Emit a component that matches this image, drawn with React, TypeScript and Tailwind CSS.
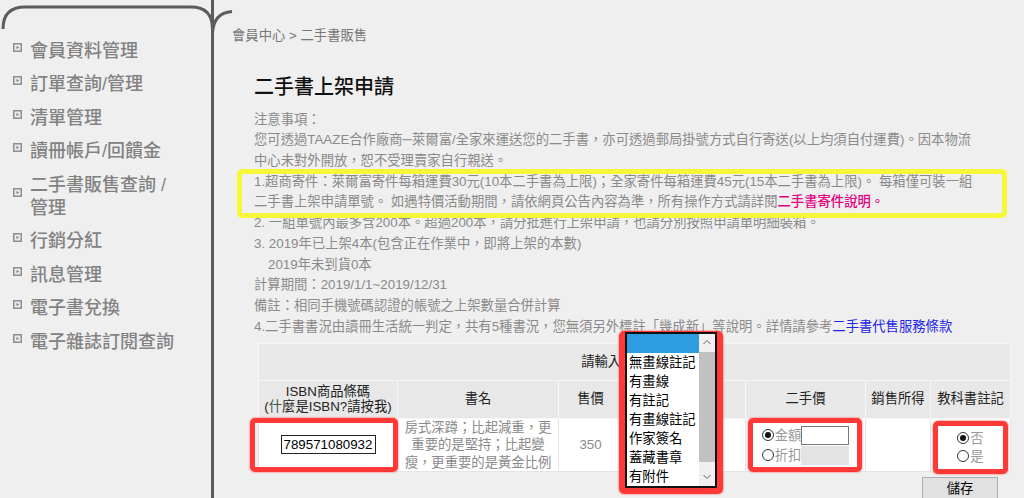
import React from "react";

function Bullet() {
  return (
    <svg width="9" height="9" viewBox="0 0 9 9" className="shrink-0 -translate-y-[4px]">
      <rect x="0" y="0" width="9" height="9" fill="#8f8f8f" />
      <rect x="1.5" y="1.5" width="6" height="6" fill="#e9e9e9" />
      <path d="M3.5 3 L6 4.5 L3.5 6 Z" fill="#7a7a7a" />
    </svg>
  );
}

function Radio({ checked }: { checked?: boolean }) {
  return (
    <span className="w-[12px] h-[12px] rounded-full border border-[#333] bg-white flex items-center justify-center shrink-0">
      {checked && <span className="w-[6px] h-[6px] rounded-full bg-[#111]" />}
    </span>
  );
}

const menu: React.ReactNode[] = [
  "會員資料管理",
  "訂單查詢/管理",
  "清單管理",
  "讀冊帳戶/回饋金",
  <>
    二手書販售查詢 /<br />
    管理
  </>,
  "行銷分紅",
  "訊息管理",
  "電子書兌換",
  "電子雜誌訂閱查詢",
];

const options = ["", "無畫線註記", "有畫線", "有註記", "有畫線註記", "作家簽名", "蓋藏書章", "有附件"];

export default function App() {
  return (
    <div className="w-[1024px] h-[498px] overflow-hidden bg-[#efefef] flex relative font-['Liberation_Sans','Noto_Sans_CJK_TC',sans-serif]">
      {/* decorative frame curves */}
      <svg className="absolute left-0 top-0 pointer-events-none" width="240" height="40" viewBox="0 0 240 40">
        <path d="M3 29 Q3 7 25 7 L191 7 Q212.5 7 212.5 29" stroke="#5c5c5c" strokeWidth="3" fill="none" />
        <path d="M212.5 34 Q213 13 232 11.5" stroke="#5c5c5c" strokeWidth="3" fill="none" />
      </svg>

      <aside className="w-[214px] shrink-0 h-full border-r-[3px] border-[#5c5c5c] pt-[39.5px] flex flex-col gap-[10.5px]">
        {menu.map((m, i) => (
          <div key={i} className="flex items-center pl-[13px]">
            <Bullet />
            <span className="ml-[8px] text-[18px] leading-[23px] text-[#828282] font-medium whitespace-nowrap">{m}</span>
          </div>
        ))}
      </aside>

      <main className="flex-1 pl-[18px] pt-[27px]">
        <div className="text-[13.33px] leading-[18px] text-[#777] whitespace-nowrap">會員中心 &gt; 二手書販售</div>
        <h1 className="ml-[22px] mt-[28px] text-[20px] leading-[28px] font-medium text-[#111] whitespace-nowrap">二手書上架申請</h1>

        <div className="ml-[22px] mt-[8.6px] text-[13.33px] leading-[20.7px] text-[#8a8a8a] whitespace-nowrap">
          <div>注意事項：</div>
          <div>您可透過TAAZE合作廠商─萊爾富/全家來運送您的二手書，亦可透過郵局掛號方式自行寄送(以上均須自付運費)。因本物流</div>
          <div>中心未對外開放，恕不受理賣家自行親送。</div>
          <div className="relative">
            <div>1.超商寄件：萊爾富寄件每箱運費30元(10本二手書為上限)；全家寄件每箱運費45元(15本二手書為上限)。 每箱僅可裝一組</div>
            <div>
              二手書上架申請單號。 如遇特價活動期間，請依網頁公告內容為準，所有操作方式請詳閱
              <span className="text-[#e4007f] font-medium">二手書寄件說明。</span>
            </div>
            <div className="absolute left-[-17px] top-[-3px] w-[770px] h-[49px] border-[5px] border-[#f7f73a] rounded-[5px] pointer-events-none" />
          </div>
          <div>2. 一組單號內最多含200本。超過200本，請分批進行上架申請，也請分別按照申請單明細裝箱。</div>
          <div>3. 2019年已上架4本(包含正在作業中，即將上架的本數)</div>
          <div className="pl-[14px]">2019年未到貨0本</div>
          <div>計算期間：2019/1/1~2019/12/31</div>
          <div>備註：相同手機號碼認證的帳號之上架數量合併計算</div>
          <div>
            4.二手書書況由讀冊生活統一判定，共有5種書況，您無須另外標註「幾成新」等說明。詳情請參考
            <span className="text-[#2323e6]">二手書代售服務條款</span>
          </div>
        </div>

        <div className="ml-[26px] mt-[5.6px] w-[752px] relative">
          <table className="w-[752px] table-fixed border-collapse text-[13.33px] text-[#222]">
            <colgroup>
              <col className="w-[139px]" />
              <col className="w-[161px]" />
              <col className="w-[64px]" />
              <col className="w-[123px]" />
              <col className="w-[120px]" />
              <col className="w-[65px]" />
              <col className="w-[80px]" />
            </colgroup>
            <tbody>
              <tr className="h-[37px] bg-[#e8e8e8]">
                <td colSpan={7} className="border border-[#f6f6f6] text-center">請輸入二手書資料</td>
              </tr>
              <tr className="h-[38px] bg-[#e8e8e8]">
                <td className="border border-[#f6f6f6] text-center leading-[15px]">
                  <div>ISBN商品條碼</div>
                  <div>
                    (<span className="text-[#3d5a3d]">什</span>麼是ISBN?請按我)
                  </div>
                </td>
                <td className="border border-[#f6f6f6] text-center">書名</td>
                <td className="border border-[#f6f6f6] text-center">售價</td>
                <td className="border border-[#f6f6f6] text-center">書況</td>
                <td className="border border-[#f6f6f6] text-center">二手價</td>
                <td className="border border-[#f6f6f6] text-center">銷售所得</td>
                <td className="border border-[#f6f6f6] text-center">教科書註記</td>
              </tr>
              <tr className="h-[52px] bg-white">
                <td className="border border-[#e4e4e4] text-center">
                  <div className="inline-flex items-center w-[95px] h-[19px] border border-[#222] px-[2px] text-black bg-white leading-none">
                    789571080932
                  </div>
                </td>
                <td className="border border-[#e4e4e4] text-center text-[#8a8a8a] leading-[17.5px] whitespace-nowrap">
                  房式深蹲；比起減重，更<br />
                  重要的是堅持；比起變<br />
                  瘦，更重要的是黃金比例
                </td>
                <td className="border border-[#e4e4e4] text-center text-[#8a8a8a]">350</td>
                <td className="border border-[#e4e4e4]"></td>
                <td className="border border-[#e4e4e4]">
                  <div className="flex flex-col items-center">
                    <div className="flex items-center h-[20px]">
                      <Radio checked />
                      <span className="text-[#9a9a9a] ml-[1px] leading-none">金額</span>
                      <span className="w-[48px] h-[19px] border border-[#777] bg-white" />
                    </div>
                    <div className="flex items-center h-[20px]">
                      <Radio />
                      <span className="text-[#9a9a9a] ml-[1px] leading-none">折扣</span>
                      <span className="w-[48px] h-[19px] bg-[#e3e3e3]" />
                    </div>
                  </div>
                </td>
                <td className="border border-[#e4e4e4]"></td>
                <td className="border border-[#e4e4e4]">
                  <div className="flex flex-col items-center mt-[4px]">
                    <div className="flex items-center h-[18px]">
                      <Radio checked />
                      <span className="text-[#9a9a9a] ml-[1px] leading-none">否</span>
                    </div>
                    <div className="flex items-center h-[18px]">
                      <Radio />
                      <span className="text-[#9a9a9a] ml-[1px] leading-none">是</span>
                    </div>
                  </div>
                </td>
              </tr>
            </tbody>
          </table>

          <div className="flex justify-end pr-[12px] mt-[5px]">
            <button className="w-[76px] h-[22px] bg-[#e1e1e1] border border-[#adadad] text-[13.33px] text-black leading-none">儲存</button>
          </div>

          {/* red annotations */}
          <div className="absolute left-[-8px] top-[75px] w-[148px] h-[54px] border-[5px] border-[#ff3838] rounded-[5px] shadow-[0_0_2px_#ff3838] pointer-events-none" />
          <div className="absolute left-[490px] top-[75px] w-[114px] h-[54px] border-[5px] border-[#ff3838] rounded-[5px] shadow-[0_0_2px_#ff3838] pointer-events-none" />
          <div className="absolute left-[675px] top-[78px] w-[75px] h-[53px] border-[5px] border-[#ff3838] rounded-[5px] shadow-[0_0_2px_#ff3838] pointer-events-none" />
          <div className="absolute left-[361px] top-[-12px] w-[104px] h-[163px] border-[6px] border-[#ff3838] rounded-[5px] shadow-[0_0_2px_#ff3838] pointer-events-none" />

          {/* open listbox */}
          <div className="absolute left-[367px] top-[-11px] w-[92px] h-[156px] border-2 border-[#111] bg-white flex">
            <div className="flex-1 flex flex-col">
              {options.map((o, i) => (
                <div
                  key={i}
                  className={
                    i === 0
                      ? "h-[19px] bg-[#2e9ce0]"
                      : "h-[19px] pl-[2px] text-[13.33px] leading-[19px] text-black whitespace-nowrap"
                  }
                >
                  {o}
                </div>
              ))}
            </div>
            <div className="w-[16px] h-full bg-[#f0f0f0] flex flex-col items-center">
              <svg width="16" height="18" viewBox="0 0 16 18">
                <path d="M4.5 10 L8 6.5 L11.5 10" stroke="#606060" strokeWidth="1" fill="none" />
              </svg>
              <div className="w-[16px] h-[110px] bg-[#c1c1c1]" />
              <div className="flex-1" />
              <svg width="16" height="18" viewBox="0 0 16 18">
                <path d="M4.5 7 L8 10.5 L11.5 7" stroke="#606060" strokeWidth="1" fill="none" />
              </svg>
            </div>
          </div>
        </div>
      </main>
    </div>
  );
}
